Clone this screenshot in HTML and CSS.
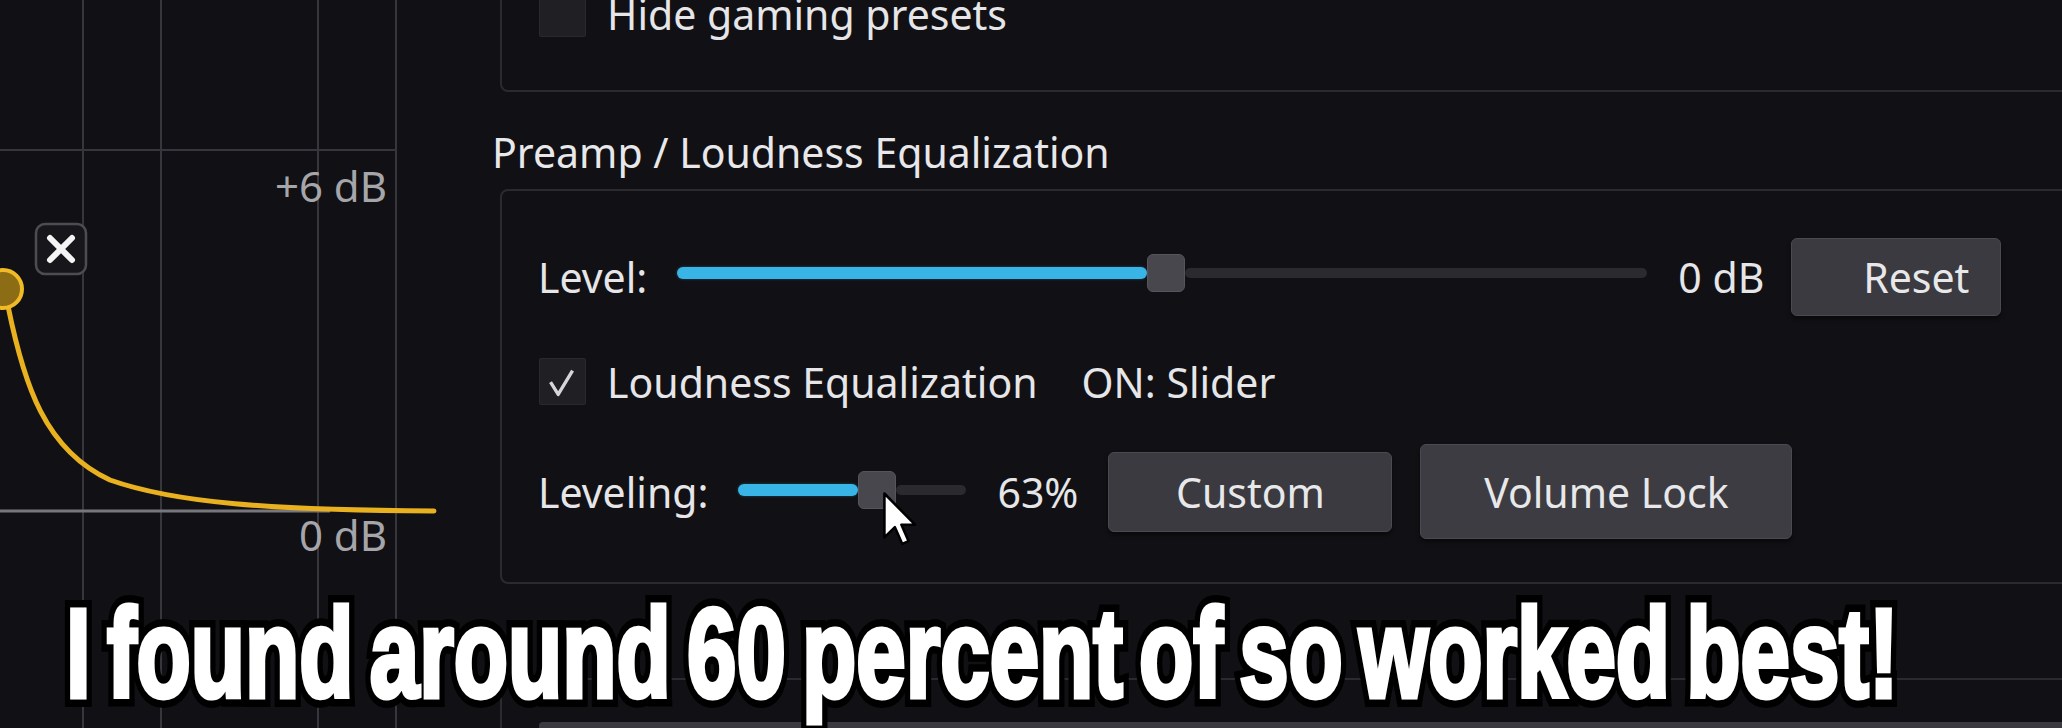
FILE: index.html
```html
<!DOCTYPE html>
<html>
<head>
<meta charset="utf-8">
<link rel="stylesheet" href="styles.css">
</head>
<body>
<div class="screen">
  <div class="graph">
    <svg class="graph-svg" width="492" height="728" viewBox="0 0 492 728">
      <g class="grid">
        <line x1="83" y1="0" x2="83" y2="728"/>
        <line x1="161" y1="0" x2="161" y2="728"/>
        <line x1="318" y1="0" x2="318" y2="728"/>
        <line x1="396" y1="0" x2="396" y2="728"/>
        <line x1="0" y1="150" x2="396" y2="150"/>
      </g>
      <line class="zero-line" x1="0" y1="511" x2="330" y2="511"/>
      <text class="db-label" x="387" y="202">+6 dB</text>
      <text class="db-label" x="387" y="551">0 dB</text>
      <path class="curve" d="M 8 306 C 24 385, 45 450, 110 480 C 175 503, 270 510, 434 511"/>
      <circle class="node" cx="3" cy="289" r="19"/>
      <rect class="close-box" x="36" y="224" width="50" height="50" rx="9"/>
      <path class="close-x" d="M 50 238 L 72 260 M 72 238 L 50 260"/>
    </svg>
  </div>

  <div class="settings">
    <div class="group group-top">
      <div class="row top-row">
        <span class="checkbox"></span>
        <span class="text">Hide gaming presets</span>
      </div>
    </div>

    <div class="group-title">Preamp / Loudness Equalization</div>

    <div class="group group-preamp">
      <div class="row level-row">
        <span class="text label-level">Level:</span>
        <div class="slider slider-level">
          <div class="fill" style="width:470px"></div>
          <div class="thumb"></div>
          <div class="rest"></div>
        </div>
        <span class="text value-db">0 dB</span>
        <button class="btn btn-reset">Reset</button>
      </div>

      <div class="row loud-row">
        <span class="checkbox checked">
          <svg width="47" height="47" viewBox="0 0 47 47"><polyline points="11,23 19,36 34,11"/></svg>
        </span>
        <span class="text loud-text">Loudness Equalization</span>
        <span class="text mode-text">ON: Slider</span>
      </div>

      <div class="row leveling-row">
        <span class="text label-leveling">Leveling:</span>
        <div class="slider slider-leveling">
          <div class="fill" style="width:120px"></div>
          <div class="thumb"></div>
          <div class="rest"></div>
        </div>
        <span class="text value-pct">63%</span>
        <button class="btn btn-custom">Custom</button>
        <button class="btn btn-lock">Volume Lock</button>
      </div>
    </div>

    <div class="group group-next">
      <div class="next-bar"></div>
    </div>
  </div>

  <svg class="cursor" width="34" height="54" viewBox="0 0 12 19">
    <path d="M0.5 0.5 L0.5 16 L4.2 12.4 L6.8 18.3 L9 17.3 L6.5 11.5 L11.3 11.5 Z"/>
  </svg>

  <div class="caption" data-text="I found around 60 percent of so worked best!">I found around 60 percent of so worked best!</div>
</div>
</body>
</html>
```
FILE: styles.css
```css
html, body {
  margin: 0;
  padding: 0;
  background: #111115;
}

.screen {
  position: relative;
  width: 2062px;
  height: 728px;
  overflow: hidden;
  display: flex;
  background: #111115;
  font-family: "Noto Sans", "Open Sans", sans-serif;
  color: #e6e6e8;
}

.graph {
  flex: 0 0 492px;
  height: 728px;
}

.graph-svg {
  display: block;
}

.grid line {
  stroke: #36363c;
  stroke-width: 2;
}

.zero-line {
  stroke: #76767c;
  stroke-width: 3;
}

.db-label {
  font-family: "Noto Sans", sans-serif;
  font-size: 42px;
  fill: #a6a6aa;
  text-anchor: end;
}

.curve {
  fill: none;
  stroke: #e9b11f;
  stroke-width: 5;
  stroke-linecap: round;
}

.node {
  fill: #8c6d16;
  stroke: #f0bb24;
  stroke-width: 4;
}

.close-box {
  fill: #17171b;
  stroke: #4c4c53;
  stroke-width: 2.5;
}

.close-x {
  stroke: #f4f4f4;
  stroke-width: 6;
  stroke-linecap: round;
  fill: none;
}

.settings {
  flex: 1 1 auto;
  display: flex;
  flex-direction: column;
  min-width: 0;
}

.settings > * {
  flex-shrink: 0;
}

.group {
  margin-left: 8px;
  margin-right: -40px;
  border: 2px solid #2a2a30;
  box-sizing: border-box;
}

.group-top {
  margin-top: -40px;
  height: 132px;
  border-top: 0;
  border-radius: 0 0 0 8px;
  padding-left: 37px;
}

.row {
  display: flex;
  align-items: center;
}

.top-row {
  height: 107px;
}

.text {
  font-size: 41px;
  line-height: normal;
  white-space: nowrap;
}

.top-row .text {
  margin-left: 21px;
}

.checkbox {
  flex: 0 0 auto;
  width: 47px;
  height: 47px;
  box-sizing: border-box;
  background: #1f1f24;
  border: 1px solid #29292e;
  border-radius: 2px;
  display: flex;
}

.checkbox svg polyline {
  fill: none;
  stroke: #d6d6d8;
  stroke-width: 3.5;
  stroke-linejoin: round;
}

.group-title {
  font-size: 41px;
  line-height: normal;
  margin: 32px 0 9px 0;
  white-space: nowrap;
  color: #e8e8ea;
}

.group-preamp {
  border-radius: 8px 0 0 8px;
  padding: 47px 0 43px 36px;
}

.level-row {
  height: 78px;
}

.slider {
  display: flex;
  align-items: center;
  flex: 0 0 auto;
}

.slider .fill {
  height: 12px;
  background: #38b4e6;
  border-radius: 6px;
  box-shadow: 0 0 3px rgba(56, 180, 230, 0.35);
}

.slider .thumb {
  width: 38px;
  height: 38px;
  box-sizing: border-box;
  background: #47474d;
  border: 1px solid #55555b;
  border-radius: 6px;
  flex: 0 0 auto;
}

.slider .rest {
  flex: 1 1 auto;
  height: 10px;
  background: #2a2a2f;
  border-radius: 5px;
}

.slider-level {
  width: 970px;
  margin-left: 30px;
  margin-top: -8px;
}

.value-db {
  margin-left: 31px;
}

.btn {
  font-family: "Noto Sans", "Open Sans", sans-serif;
  font-size: 41px;
  color: #e8e8ea;
  background: #3a3a40;
  border: 1px solid #4a4a51;
  border-radius: 6px;
  padding: 0;
  box-sizing: border-box;
  flex: 0 0 auto;
  box-shadow: 0 3px 4px rgba(0, 0, 0, 0.45);
}

.btn-reset {
  width: 210px;
  height: 78px;
  margin-left: 27px;
  padding-left: 40px;
}

.loud-row {
  margin-top: 42px;
  height: 47px;
}

.loud-row .checkbox {
  margin-left: 1px;
}

.loud-text {
  margin-left: 21px;
}

.mode-text {
  margin-left: 44px;
}

.leveling-row {
  margin-top: 39px;
  height: 95px;
}

.slider-leveling {
  width: 228px;
  margin-left: 30px;
  margin-top: -4px;
}

.value-pct {
  margin-left: 31px;
}

.btn-custom {
  width: 284px;
  height: 80px;
  margin-left: 30px;
}

.btn-lock {
  width: 372px;
  height: 95px;
  margin-left: 28px;
  background: #3c3c42;
}

.group-next {
  margin-top: 94px;
  border-bottom: 0;
  border-radius: 8px 0 0 0;
  padding: 42px 0 0 37px;
  height: 200px;
}

.next-bar {
  height: 30px;
  background: #3a3a40;
  border-radius: 4px;
}

.cursor {
  position: absolute;
  left: 883px;
  top: 492px;
}

.cursor path {
  fill: #ffffff;
  stroke: #000000;
  stroke-width: 0.9;
  stroke-linejoin: round;
}

.caption {
  position: absolute;
  left: 66px;
  top: 591px;
  font-family: "Liberation Sans", Arial, sans-serif;
  font-weight: 700;
  font-size: 126px;
  line-height: 1;
  word-spacing: -12px;
  white-space: nowrap;
  color: #ffffff;
  -webkit-text-stroke: 5px #ffffff;
  transform-origin: left top;
  transform: scaleX(0.705);
}

.caption::before {
  content: attr(data-text);
  position: absolute;
  left: 0;
  top: 0;
  z-index: -1;
  color: #000000;
  -webkit-text-stroke: 20px #000000;
}
```
